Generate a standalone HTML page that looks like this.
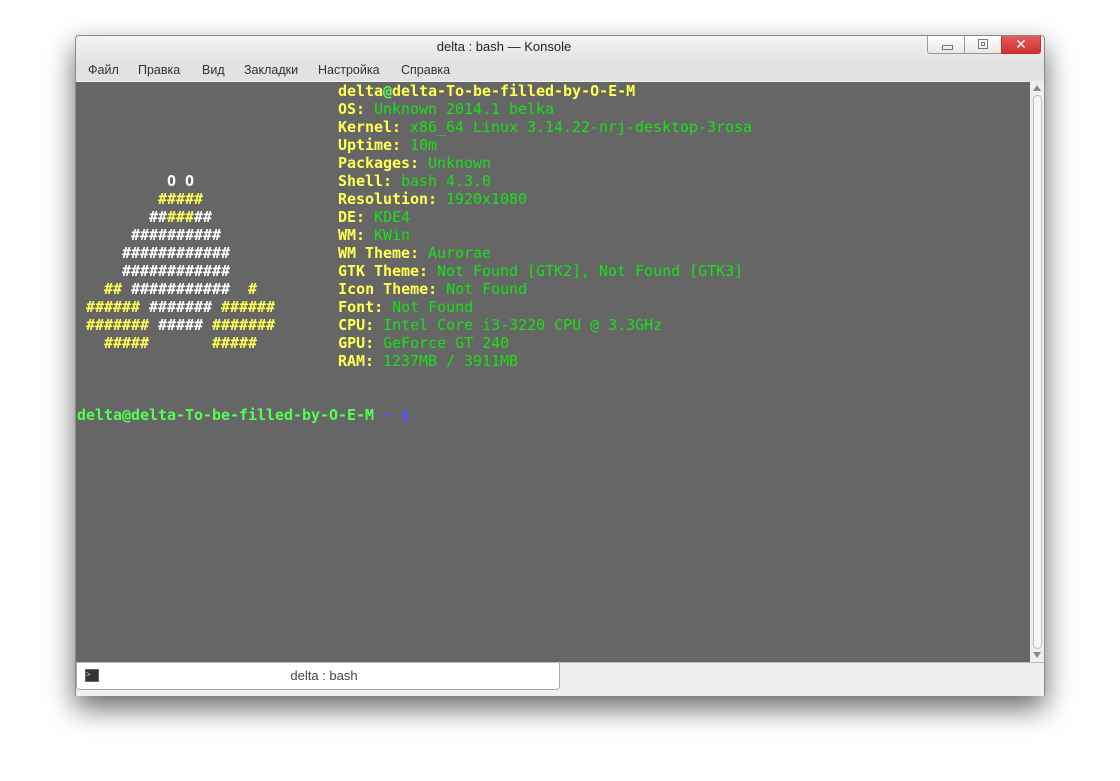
<!DOCTYPE html>
<html><head><meta charset="utf-8"><style>
body{margin:0;width:1120px;height:781px;background:#fff;position:relative;overflow:hidden;font-family:"Liberation Sans","DejaVu Sans",sans-serif}
.win{position:absolute;left:75px;top:35px;width:968px;height:659px;background:#efefef;border:1px solid #8a8a8a;border-radius:4px 4px 0 0;box-shadow:0 12px 28px rgba(0,0,0,.6)}
.title{position:absolute;left:0;top:0;width:856px;height:23px;text-align:center;font-size:13px;line-height:22px;color:#222}
.titlebg{position:absolute;left:0;top:0;width:968px;height:23px;background:linear-gradient(#f4f4f4,#e4e4e4);border-radius:4px 4px 0 0}
.menu{position:absolute;left:0;top:23px;width:968px;height:22px;background:#e2e2e2;font-size:12.5px;line-height:22px;color:#333}
.menu span{position:absolute}
.btn{position:absolute;top:0;height:17px;border:1px solid #999;border-top:none;background:linear-gradient(#fff,#e8e8e8)}
.term{position:absolute;left:0;top:46px;width:954px;height:580px;background:#666}
.sb{position:absolute;left:954px;top:46px;width:14px;height:580px;background:#eee}
pre{margin:0;position:absolute;left:1px;top:0;font-family:"DejaVu Sans Mono","Liberation Mono",monospace;font-size:15px;line-height:18px;font-weight:bold;color:#fff;letter-spacing:-0.03px}
.y{color:#ffff54}.g{color:#18e018;font-weight:normal}.G{color:#54ff54}.b{color:#5454ff}.w{color:#fff}
.tabbar{position:absolute;left:0;top:626px;width:968px;height:33px;background:#efefef;border-top:1px solid #bbb}
.tab{position:absolute;left:0;top:0;width:482px;height:26px;background:#fff;border:1px solid #aaa;border-top:none;border-radius:0 0 4px 4px;text-align:center;font-size:13px;line-height:26px;color:#444}
</style></head><body>
<div class="win">
 <div class="titlebg"></div>
 <div class="title">delta : bash — Konsole</div>
 <div class="btn" style="left:851px;width:36px;border-radius:0 0 0 3px"><div style="position:absolute;left:14px;top:9px;width:9px;height:3px;border:1px solid #777"></div></div>
 <div class="btn" style="left:888px;width:37px"><div style="position:absolute;left:13px;top:3px;width:8px;height:8px;border:1px solid #777"></div><div style="position:absolute;left:16px;top:6px;width:2px;height:2px;border:1px solid #777"></div></div>
 <div class="btn" style="left:925px;width:38px;background:linear-gradient(#e85a5a,#cc3030);border-color:#b33;border-radius:0 0 3px 0;color:#fff;font-weight:bold;font-size:14px;text-align:center;line-height:16px">✕</div>
 <div class="menu"><span style="left:12px">Файл</span><span style="left:62px">Правка</span><span style="left:126px">Вид</span><span style="left:168px">Закладки</span><span style="left:242px">Настройка</span><span style="left:325px">Справка</span></div>
 <div class="term"><pre><span class="y">                             delta</span><span class="G">@</span><span class="y">delta-To-be-filled-by-O-E-M</span>
<span class="y">                             OS: </span><span class="g">Unknown 2014.1 belka</span>
<span class="y">                             Kernel: </span><span class="g">x86_64 Linux 3.14.22-nrj-desktop-3rosa</span>
<span class="y">                             Uptime: </span><span class="g">10m</span>
<span class="y">                             Packages: </span><span class="g">Unknown</span>
          O O                <span class="y">Shell: </span><span class="g">bash 4.3.0</span>
<span class="y">         #####               Resolution: </span><span class="g">1920x1080</span>
        ##<span class="y">###</span>##              <span class="y">DE: </span><span class="g">KDE4</span>
      ##########             <span class="y">WM: </span><span class="g">KWin</span>
     ############            <span class="y">WM Theme: </span><span class="g">Aurorae</span>
     ############            <span class="y">GTK Theme: </span><span class="g">Not Found [GTK2], Not Found [GTK3]</span>
   <span class="y">##</span> ###########  <span class="y">#</span>         <span class="y">Icon Theme: </span><span class="g">Not Found</span>
 <span class="y">######</span> ####### <span class="y">######</span>       <span class="y">Font: </span><span class="g">Not Found</span>
 <span class="y">#######</span> ##### <span class="y">#######</span>       <span class="y">CPU: </span><span class="g">Intel Core i3-3220 CPU @ 3.3GHz</span>
   <span class="y">#####</span>       <span class="y">#####</span>         <span class="y">GPU: </span><span class="g">GeForce GT 240</span>
<span class="y">                             RAM: </span><span class="g">1237MB / 3911MB</span>


<span class="G">delta@delta-To-be-filled-by-O-E-M</span> <span class="b">~ $</span></pre></div>
 <div class="sb"><div style="position:absolute;left:3px;top:3px;width:0;height:0;border:4px solid transparent;border-bottom:6px solid #888;border-top:none"></div><div style="position:absolute;left:3px;top:13px;width:7px;height:552px;border:1px solid #bbb;border-radius:5px;background:#f6f6f6"></div><div style="position:absolute;left:3px;top:570px;width:0;height:0;border:4px solid transparent;border-top:6px solid #888;border-bottom:none"></div></div>
 <div class="tabbar"><div class="tab"><div style="position:absolute;left:8px;top:6px;width:12px;height:11px;background:#333;border:1px solid #666;color:#ddd;font-size:8px;line-height:10px;text-align:left">&gt;</div><span style="position:relative;left:6px">delta : bash</span></div></div>
</div>
</body></html>
